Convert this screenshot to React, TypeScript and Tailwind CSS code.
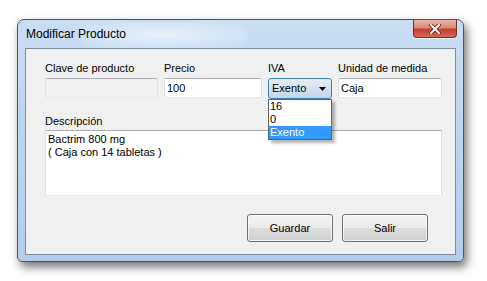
import React from "react";

const font = { fontFamily: "'Liberation Sans', Arial, sans-serif" };

function Label({ children }: { children: React.ReactNode }) {
  return <div className="h-[13px] text-[11px] leading-[13px] text-black">{children}</div>;
}

function TextBox({ value, disabled, w }: { value?: string; disabled?: boolean; w: string }) {
  return (
    <div
      className={`${w} mt-[3px] h-[20px] rounded-[2px] border border-t-[#abadb3] border-l-[#dbdfe6] border-r-[#dbdfe6] border-b-[#e3e9ef] px-[2px] text-[11px] leading-[18px] text-black ${
        disabled ? "bg-[#f0f0f0] border-[#b3b3b3]" : "bg-white"
      }`}
    >
      {value}
    </div>
  );
}

export default function App() {
  return (
    <div className="w-[487px] h-[281px] bg-white pt-[19px] pl-[17px]" style={font}>
      <div className="relative w-[447px] h-[243px] rounded-t-[7px] rounded-b-[5px] border border-[#4a5666] bg-gradient-to-b from-[#c9def3] via-[#bcd4ee] to-[#b4cdea] shadow-[3px_5px_10px_rgba(0,0,0,0.55)] flex flex-col">
        {/* glass highlight */}
        <div className="pointer-events-none absolute left-[60px] top-[2px] h-[26px] w-[170px] rounded-full bg-[radial-gradient(ellipse_at_center,rgba(255,255,255,0.55),rgba(255,255,255,0))]" />
        {/* title bar */}
        <div className="relative h-[28px] flex items-center pl-[8px]">
          <span className="text-[12px] leading-[15px] text-black">Modificar Producto</span>
          <div className="absolute top-0 right-[6px] w-[44px] h-[18px] rounded-b-[4px] border border-t-0 border-[#7a2e26] bg-[linear-gradient(to_bottom,#eab4a8_0%,#d98a7a_45%,#c43c2e_55%,#d66a55_100%)] flex items-center justify-center shadow-[0_1px_0_rgba(255,255,255,0.6)]">
            <svg width="12" height="10" viewBox="0 0 12 10">
              <path d="M2 1 L10 9 M10 1 L2 9" stroke="#5a1a14" strokeWidth="3.4" strokeLinecap="square" />
              <path d="M2 1 L10 9 M10 1 L2 9" stroke="#ffffff" strokeWidth="2" strokeLinecap="square" />
            </svg>
          </div>
        </div>
        {/* client */}
        <div className="mx-[7px] h-[207px] border border-[#7d8ea3] bg-[#f0f0f0] pl-[19px] pt-[13px]">
          <div className="flex">
            <div className="w-[113px]">
              <Label>Clave de producto</Label>
              <TextBox disabled w="w-[113px]" />
            </div>
            <div className="ml-[6px] w-[98px]">
              <Label>Precio</Label>
              <TextBox value="100" w="w-[98px]" />
            </div>
            <div className="ml-[6px] w-[64px] relative">
              <Label>IVA</Label>
              <div className="mt-[3px] h-[21px] w-[64px] rounded-[3px] border border-[#3c7fb1] bg-gradient-to-b from-[#e7eef6] via-[#d5e2ef] to-[#c3d6ea] flex items-center pl-[3px] text-[11px] leading-[13px] text-black">
                <span className="flex-1">Exento</span>
                <svg width="7" height="4" viewBox="0 0 7 4" className="mr-[5px]">
                  <path d="M0 0 H7 L3.5 4 Z" fill="#000" />
                </svg>
              </div>
              <div className="absolute left-0 top-[37px] w-[64px] border border-[#646464] bg-white text-[11px] leading-[13px] text-black shadow-[3px_3px_3px_rgba(0,0,0,0.3)] z-10">
                <div className="h-[13px] pl-[1px]">16</div>
                <div className="h-[13px] pl-[1px]">0</div>
                <div className="h-[13px] pl-[1px] bg-[#3399ff] text-white">Exento</div>
              </div>
            </div>
            <div className="ml-[6px] w-[104px]">
              <Label>Unidad de medida</Label>
              <TextBox value="Caja" w="w-[104px]" />
            </div>
          </div>
          <div className="mt-[16px]">
            <Label>Descripción</Label>
            <div className="mt-[2px] h-[66px] w-[397px] border border-t-[#abadb3] border-l-[#dbdfe6] border-r-[#dbdfe6] border-b-[#e3e9ef] bg-white px-[2px] pt-[2px] text-[11px] leading-[13px] text-black">
              <div>Bactrim 800 mg</div>
              <div>( Caja con 14 tabletas )</div>
            </div>
          </div>
          <div className="mt-[18px] flex gap-[9px] pl-[202px]">
            {["Guardar", "Salir"].map((t) => (
              <div
                key={t}
                className="h-[28px] w-[86px] rounded-[3px] border border-[#707070] bg-[linear-gradient(to_bottom,#f2f2f2_0%,#ebebeb_50%,#dddddd_51%,#cfcfcf_100%)] flex items-center justify-center text-[11px] text-black shadow-[inset_0_0_0_1px_rgba(255,255,255,0.7)]"
              >
                {t}
              </div>
            ))}
          </div>
        </div>
      </div>
    </div>
  );
}
